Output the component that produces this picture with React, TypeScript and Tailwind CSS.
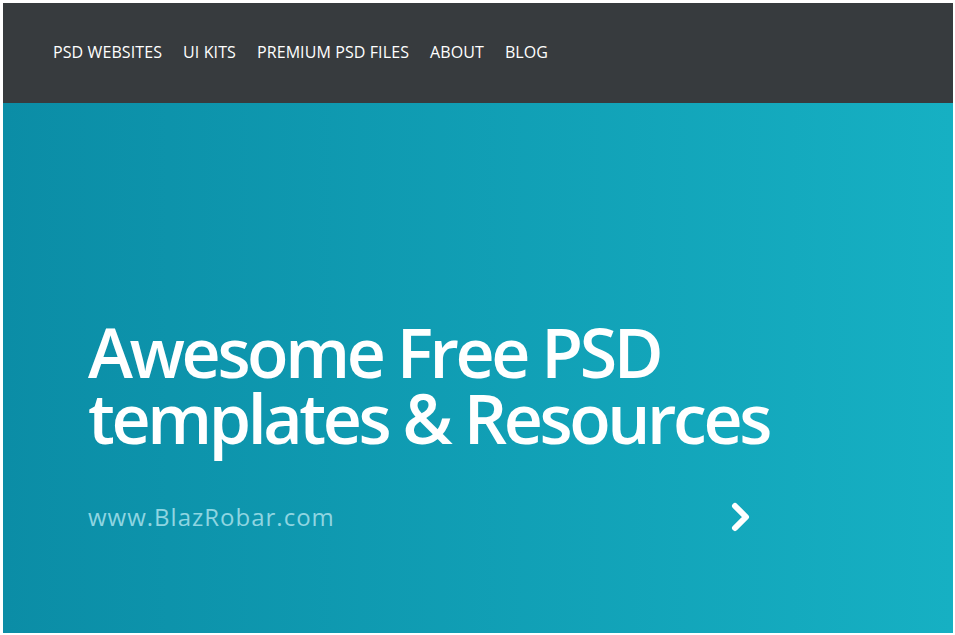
import React from 'react';

const navItems = ['PSD WEBSITES', 'UI KITS', 'PREMIUM PSD FILES', 'ABOUT', 'BLOG'];

const App: React.FC = () => {
  return (
    <div className="w-[955px] h-[635px] bg-white pt-[3px] pl-[3px] pr-[2px] pb-[2px] overflow-hidden">
      <div className="flex flex-col h-full">
        <nav className="h-[100px] bg-[#373b3e] flex items-center pl-[50px] pb-[2px] gap-[21px] font-['Open_Sans',sans-serif] font-medium text-[16px] text-white">
          {navItems.map((item) => (
            <a key={item} className="tracking-[0.1px]">
              {item}
            </a>
          ))}
        </nav>

        <section className="flex-1 bg-gradient-to-r from-[#0b8da6] to-[#16b0c3] pl-[85px] pt-[216px]">
          <h1 className="font-['Open_Sans',sans-serif] font-semibold text-white text-[68px] leading-[66px] tracking-[-3.4px]">
            Awesome Free PSD
            <br />
            templates &amp; Resources
          </h1>
          <div className="mt-[50px] flex items-center w-[664px] justify-between">
            <span className="font-['Open_Sans',sans-serif] text-[24px] leading-[32px] tracking-[1px] text-[#8fd5e1]">
              www.BlazRobar.com
            </span>
            <svg width="22" height="30" viewBox="0 0 22 30" fill="none">
              <path d="M5 4 L16 15 L5 26" stroke="white" strokeWidth="6" strokeLinecap="round" strokeLinejoin="round" />
            </svg>
          </div>
        </section>
      </div>
    </div>
  );
};

export default App;
